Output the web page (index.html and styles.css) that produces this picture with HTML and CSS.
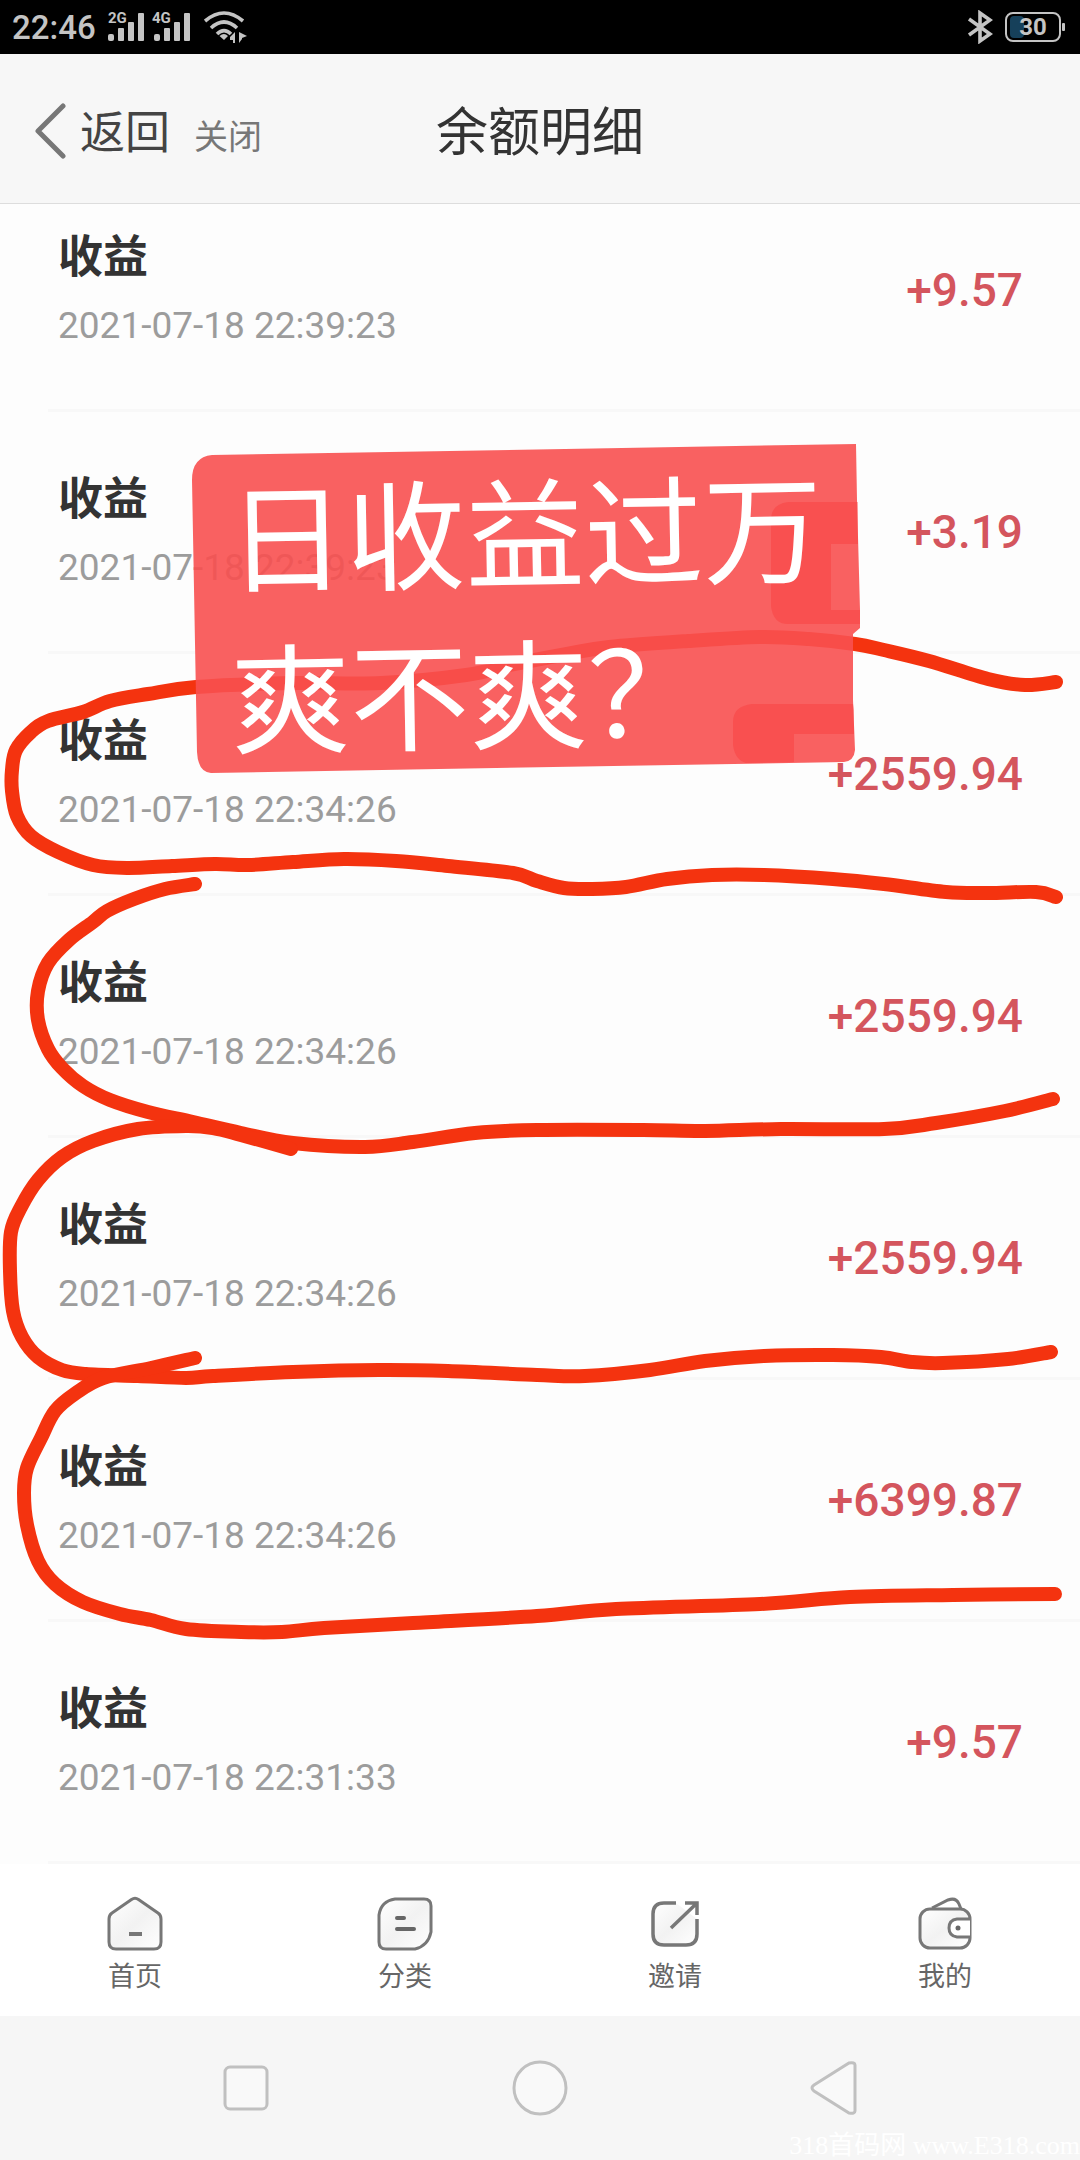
FILE: index.html
```html
<!DOCTYPE html>
<html lang="zh-CN">
<head>
<meta charset="utf-8">
<meta name="viewport" content="width=device-width, initial-scale=1">
<title>余额明细</title>
<link rel="stylesheet" href="styles.css">
</head>
<body>
<div class="screen">
  <div class="status">
    <div class="status-group">
      <span class="clock">22:46</span>
      <svg class="signal" width="84" height="30" viewBox="0 0 84 30" aria-hidden="true">
        <g fill="#c4c4c4">
          <text class="net" x="0" y="11">2G</text>
          <rect x="0" y="22" width="6" height="7" rx="2"/><rect x="10" y="16" width="6" height="13" rx="1"/><rect x="20" y="10" width="6" height="19" rx="1"/><rect x="30" y="1" width="6" height="28" rx="1"/>
          <text class="net" x="44" y="11">4G</text>
          <rect x="46" y="22" width="6" height="7" rx="2"/><rect x="56" y="16" width="6" height="13" rx="1"/><rect x="66" y="10" width="6" height="19" rx="1"/><rect x="76" y="1" width="6" height="28" rx="1"/>
        </g>
      </svg>
      <svg width="44" height="34" viewBox="0 0 44 34" aria-hidden="true">
        <g fill="none" stroke="#c4c4c4" stroke-width="3.6">
          <path d="M1 11Q20-5 39 11"/><path d="M7 18Q20 6 33 18"/><path d="M13 24Q20 17 27 24"/>
        </g>
        <path d="M15.5 26Q20 22 24 26L20 30z" fill="#c4c4c4"/>
        <path d="M31 22V33H29V30H26V27zM35 33V22L43 26L38 28V29z" fill="#c4c4c4"/>
      </svg>
    </div>
    <div class="status-group">
      <svg width="26" height="34" viewBox="0 0 26 34" aria-hidden="true">
        <path d="M2 9L23 24L13 31V3L23 10L2 25" fill="none" stroke="#c4c4c4" stroke-width="3.6"/>
      </svg>
      <svg width="60" height="32" viewBox="0 0 60 32" aria-hidden="true">
        <rect x="5" y="5" width="14" height="22" rx="4" fill="#16405a"/>
        <rect x="1" y="2" width="54" height="28" rx="7" fill="none" stroke="#c4c4c4" stroke-width="2"/>
        <rect x="57" y="12" width="3" height="8" rx="1" fill="#c4c4c4"/>
        <text class="charge" x="28" y="24" text-anchor="middle">30</text>
      </svg>
    </div>
  </div>

  <header class="header">
    <div class="header-left">
      <button class="back" type="button">
        <svg width="32" height="64" viewBox="0 0 32 64" aria-hidden="true"><path d="M29 4L4 29L29 54" fill="none" stroke="#777" stroke-width="5" stroke-linecap="round" stroke-linejoin="round"/></svg>
        <span>返回</span>
      </button>
      <button class="close" type="button">关闭</button>
    </div>
    <h1 class="title">余额明细</h1>
  </header>

  <main class="list-area">
    <ul class="list">
      <li class="row"><div><h2 class="name">收益</h2><time class="time">2021-07-18 22:39:23</time></div><span class="amount">+9.57</span></li>
      <li class="row"><div><h2 class="name">收益</h2><time class="time">2021-07-18 22:39:23</time></div><span class="amount">+3.19</span></li>
      <li class="row"><div><h2 class="name">收益</h2><time class="time">2021-07-18 22:34:26</time></div><span class="amount">+2559.94</span></li>
      <li class="row"><div><h2 class="name">收益</h2><time class="time">2021-07-18 22:34:26</time></div><span class="amount">+2559.94</span></li>
      <li class="row"><div><h2 class="name">收益</h2><time class="time">2021-07-18 22:34:26</time></div><span class="amount">+2559.94</span></li>
      <li class="row"><div><h2 class="name">收益</h2><time class="time">2021-07-18 22:34:26</time></div><span class="amount">+6399.87</span></li>
      <li class="row"><div><h2 class="name">收益</h2><time class="time">2021-07-18 22:31:33</time></div><span class="amount">+9.57</span></li>
    </ul>
  </main>

  <nav class="tabs">
    <a class="tab" href="#home">
      <svg width="56" height="56" viewBox="0 0 56 56" aria-hidden="true">
        <path d="M24.500 3.500Q28 1 31.500 3.500L51 17Q54 19 54 23V46Q54 53 47 53H9Q2 53 2 46V23Q2 19 5 17z" fill="url(#soft)" stroke="#777" stroke-width="3"/>
        <path d="M22 38H35" stroke="#777" stroke-width="4"/>
      </svg>
      <span>首页</span>
    </a>
    <a class="tab" href="#category">
      <svg width="56" height="56" viewBox="0 0 56 56" aria-hidden="true">
        <path d="M18 3H47Q54 3 54 10V36Q51 50 38 53H9Q2 53 2 46V19Q4 5 18 3z" fill="url(#soft)" stroke="#777" stroke-width="3"/>
        <path d="M20 22H27M20 33H37" stroke="#666" stroke-width="4" stroke-linecap="round"/>
      </svg>
      <span>分类</span>
    </a>
    <a class="tab" href="#invite">
      <svg width="56" height="56" viewBox="0 0 56 56" aria-hidden="true">
        <path d="M29 7H17Q6 7 6 18V38Q6 49 17 49H39Q50 49 50 38V23" fill="url(#soft)" stroke="#777" stroke-width="3.500"/>
        <path d="M38 7H50V19M50 7L24 32" fill="none" stroke="#777" stroke-width="3.500"/>
      </svg>
      <span>邀请</span>
    </a>
    <a class="tab" href="#mine">
      <svg width="56" height="56" viewBox="0 0 56 56" aria-hidden="true">
        <path d="M15 12L31 4Q39 1 42 8L44 13" fill="#fff" stroke="#777" stroke-width="3"/>
        <rect x="3" y="13" width="50" height="39" rx="10" fill="url(#soft)" stroke="#777" stroke-width="3"/>
        <path d="M53 23H40Q32 24 32 32Q32 40 40 41H53" fill="#fff" stroke="#777" stroke-width="3"/>
        <circle cx="41" cy="32" r="2.500" fill="#666"/>
      </svg>
      <span>我的</span>
    </a>
  </nav>

  <footer class="system">
    <button class="key" type="button" aria-label="recent"><svg width="56" height="56" viewBox="0 0 56 56"><rect x="7" y="7" width="42" height="42" rx="5"/></svg></button>
    <button class="key" type="button" aria-label="home"><svg width="56" height="56" viewBox="0 0 56 56"><circle cx="28" cy="28" r="26"/></svg></button>
    <button class="key" type="button" aria-label="back"><svg width="56" height="56" viewBox="0 0 56 56"><path d="M8 25L43 3Q49 2 49 5V51Q49 54 43 53L8 31Q4 28 8 25z"/></svg></button>
    <p class="mark">318首码网 www.E318.com</p>
  </footer>

  <svg class="notes" viewBox="0 0 1080 2160">
    <defs>
      <linearGradient id="soft" x1="0" y1="0" x2="1" y2="1"><stop offset="0" stop-color="#fff"/><stop offset=".5" stop-color="#f2f2f2"/><stop offset="1" stop-color="#fff"/></linearGradient>
    </defs>
    <g class="pen" id="pen"></g>
    <path class="sticker" d="M212 455L856 444L857 500L860 610V628L853 634V700L855 750Q854 761 844 762L211 773Q198 772 197 752L192 480Q192 457 212 455z"/>
    <path class="patch" d="M858 502H788Q771 504 771 520V606Q773 624 788 624H860V610H831V544H858z"/>
    <path class="patch" d="M853 704H752Q733 706 733 722V745Q735 760 746 763L794 762V734H854V710z"/>
    <text class="shout" transform="rotate(-1 228 585)"><tspan x="228" y="584">日收益过万</tspan><tspan x="229" y="745">爽不爽？</tspan></text>
  </svg>
</div>
<script src="pen.js"></script>
</body>
</html>
```
FILE: styles.css
```css
* { box-sizing: border-box; }

body, h1, h2, p, ul { margin: 0; padding: 0; }

body {
  background: #fdfdfd;
  color: #333;
  font-family: Roboto, "Noto Sans CJK SC", sans-serif;
}

button {
  padding: 0;
  border: 0;
  background: none;
  color: inherit;
  font-family: inherit;
}

svg { display: block; }

.screen {
  position: relative;
  display: flex;
  flex-direction: column;
  min-height: 100vh;
  overflow: hidden;
}

/* status bar */
.status {
  display: flex;
  justify-content: space-between;
  align-items: center;
  height: 54px;
  padding: 0 15px 0 12px;
  background: #000;
}

.status-group {
  display: flex;
  align-items: center;
  gap: 12px;
}

.clock {
  color: #c4c4c4;
  font-size: 33px;
  font-weight: 500;
}

.signal { overflow: visible; }

.net {
  font-size: 15px;
  font-weight: 700;
}

.charge {
  fill: #c4c4c4;
  font-size: 24px;
  font-weight: 700;
}

/* title bar */
.header {
  position: relative;
  z-index: 1;
  display: grid;
  grid-template-columns: 1fr auto 1fr;
  align-items: center;
  height: 150px;
  padding: 10px 34px 0;
  border-bottom: 1px solid #ddd;
  background: #f7f7f7;
}

.header-left {
  display: flex;
  align-items: center;
  gap: 24px;
}

.back {
  display: flex;
  align-items: center;
  gap: 14px;
  color: #444;
  font-size: 45px;
  line-height: 64px;
}

.close {
  padding-top: 6px;
  color: #777;
  font-size: 34px;
  line-height: 48px;
}

.title {
  font-size: 52px;
  font-weight: 400;
  line-height: 72px;
}

/* entries, scrolled a little under the title bar */
.list-area {
  flex: 1;
  background: #fdfdfd;
}

.list {
  margin-top: -34px;
  list-style: none;
}

.row {
  display: flex;
  justify-content: space-between;
  align-items: center;
  height: 242px;
  margin-left: 48px;
  padding: 0 57px 0 10px;
  border-bottom: 3px solid #f8f8f8;
}

.name {
  font-size: 45px;
  font-weight: 700;
  line-height: 72px;
}

.time {
  display: block;
  color: #9c9c9c;
  font-size: 37px;
  line-height: 64px;
}

.amount {
  color: #d4555d;
  font-size: 46px;
  font-weight: 500;
}

/* bottom tabs */
.tabs {
  display: grid;
  grid-template-columns: repeat(4, 1fr);
  height: 152px;
  padding-top: 32px;
  background: #fff;
}

.tab {
  display: flex;
  flex-direction: column;
  align-items: center;
  gap: 4px;
  color: #666;
  font-size: 27px;
  line-height: 42px;
  text-decoration: none;
}

/* system keys */
.system {
  position: relative;
  display: flex;
  justify-content: center;
  align-items: center;
  gap: 238px;
  height: 144px;
  background: #f6f6f6;
}

.key svg {
  fill: #f9f9f9;
  stroke: #c0c0c0;
  stroke-width: 3px;
}

.mark {
  position: absolute;
  right: 0;
  bottom: 0;
  color: #fff;
  font-family: "Liberation Serif", "Noto Sans CJK SC", serif;
  font-size: 26px;
  line-height: 28px;
  white-space: pre;
}

/* hand-drawn notes on top of the screen */
.notes {
  position: absolute;
  z-index: 2;
  top: 0;
  left: 0;
  width: 100%;
  pointer-events: none;
}

.pen {
  fill: none;
  stroke: #f4330f;
  stroke-width: 14px;
  stroke-linecap: round;
  stroke-linejoin: round;
}

.sticker { fill: rgba(248, 80, 80, 0.9); }

.patch { fill: rgba(248, 50, 50, 0.35); }

.shout {
  fill: #fff;
  font-family: "Noto Sans CJK SC", sans-serif;
  font-size: 119px;
}
```
FILE: pen.js
```js
// Sampled points of each freehand stroke.
const strokes = [
  [1056,682, 1025,685, 988,679, 929,661, 884,650, 855,644, 809,639, 760,637, 688,641, 609,647, 567,654, 515,664, 466,675, 381,683, 291,683, 196,687, 148,694, 110,701, 83,712, 48,721, 31,732, 16,750, 12,770, 12,791, 17,816, 31,836, 58,852, 93,865, 127,868, 172,866, 215,864, 248,865, 293,862, 344,859, 396,861, 448,866, 513,873, 537,881, 564,888, 592,889, 626,887, 667,879, 712,875, 764,875, 833,879, 884,884, 946,892, 988,893, 1036,892, 1056,897],
  [195,884, 165,889, 134,899, 107,911, 93,922, 69,940, 48,963, 38,991, 38,1020, 48,1049, 62,1068, 83,1086, 110,1100, 148,1112, 193,1122, 241,1133, 293,1143, 365,1147, 413,1142, 475,1133, 537,1130, 643,1130, 705,1131, 781,1129, 884,1129, 936,1123, 1005,1111, 1053,1099],
  [291,1149, 241,1135, 213,1128, 186,1126, 138,1129, 93,1141, 62,1157, 38,1180, 21,1207, 11,1232, 10,1271, 13,1311, 22,1337, 38,1357, 62,1370, 86,1374, 138,1376, 186,1378, 213,1376, 293,1372, 379,1370, 448,1371, 537,1375, 585,1376, 650,1370, 705,1361, 764,1356, 833,1355, 881,1357, 912,1362, 943,1363, 1008,1359, 1051,1352],
  [195,1358, 151,1368, 103,1378, 76,1393, 55,1411, 41,1438, 27,1468, 24,1493, 27,1525, 38,1561, 55,1584, 83,1602, 120,1614, 151,1620, 186,1629, 241,1632, 282,1632, 324,1628, 413,1623, 537,1616, 616,1609, 760,1604, 850,1597, 953,1595, 1055,1594]
];

// Joins the points with Catmull-Rom curves, written as cubic Béziers.
function smooth(flat) {
  const p = [];
  for (let i = 0; i < flat.length; i += 2) p.push([flat[i], flat[i + 1]]);
  let d = "M" + p[0];
  for (let i = 0; i < p.length - 1; i++) {
    const a = p[i - 1] || p[i], b = p[i], c = p[i + 1], e = p[i + 2] || c;
    d += "C" + [
      b[0] + (c[0] - a[0]) / 6, b[1] + (c[1] - a[1]) / 6,
      c[0] - (e[0] - b[0]) / 6, c[1] - (e[1] - b[1]) / 6,
      c[0], c[1]
    ];
  }
  return d;
}

const pen = document.getElementById("pen");
for (const points of strokes) {
  const path = document.createElementNS("http://www.w3.org/2000/svg", "path");
  path.setAttribute("d", smooth(points));
  pen.appendChild(path);
}
```
